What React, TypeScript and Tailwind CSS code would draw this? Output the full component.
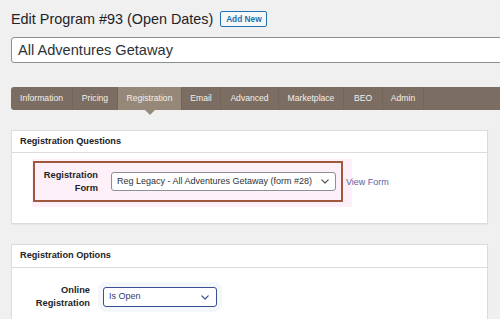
import React from "react";

const Chevron = ({ color = "#50575e" }: { color?: string }) => (
  <svg width="8" height="5" viewBox="0 0 8 5" fill="none">
    <polyline points="0.8,0.8 4,4 7.2,0.8" stroke={color} strokeWidth="1.2" strokeLinecap="round" strokeLinejoin="round" />
  </svg>
);

const tabs = [
  { name: "Information", w: 62 },
  { name: "Pricing", w: 45 },
  { name: "Registration", w: 64, active: true },
  { name: "Email", w: 39 },
  { name: "Advanced", w: 58 },
  { name: "Marketplace", w: 65 },
  { name: "BEO", w: 39 },
  { name: "Admin", w: 41 },
];

export default function App() {
  return (
    <div
      className="w-[500px] h-[319px] overflow-hidden bg-[#f0f0f1] pl-[11px]"
      style={{ fontFamily: '"Liberation Sans", Arial, sans-serif' }}
    >
      {/* Title row */}
      <div className="flex items-center h-[16px] mt-[11px]">
        <h1 className="text-[14.4px] leading-none text-[#1d2327] whitespace-nowrap">
          Edit Program #93 (Open Dates)
        </h1>
        <button className="ml-[7px] h-[16px] w-[47px] border border-[#2271b1] rounded-[2px] bg-[#f6f7f7] text-[#2271b1] text-[8.3px] font-bold leading-none flex items-center justify-center">
          Add New
        </button>
      </div>

      {/* Title input */}
      <div className="mt-[10px] w-[500px] h-[26px] bg-white border border-[#8c8f94] rounded-[3px] flex items-center pl-[6px]">
        <span className="text-[14.6px] text-[#2c3338] leading-none whitespace-nowrap">All Adventures Getaway</span>
      </div>

      {/* Tabs */}
      <div className="mt-[24px] w-[500px] h-[23px] bg-[#7b6d61] rounded-l-[3px] flex">
        {tabs.map((t) => (
          <div
            key={t.name}
            style={{ width: t.w }}
            className={
              "relative h-full flex items-center justify-center border-r border-[#72655a] text-[8.6px] text-[#f3efeb] whitespace-nowrap " +
              (t.active ? "bg-[#958879]" : "")
            }
          >
            {t.name}
            {t.active && (
              <div className="absolute left-1/2 -translate-x-1/2 top-full w-0 h-0 border-l-[5px] border-r-[5px] border-t-[5px] border-l-transparent border-r-transparent border-t-[#958879]" />
            )}
          </div>
        ))}
      </div>

      {/* Panel 1 */}
      <div className="mt-[20px] w-[477px] h-[94px] bg-white border border-[#dcdcde] shadow-[0_1px_1px_rgba(0,0,0,0.04)]">
        <div className="h-[22px] border-b border-[#dcdcde] flex items-center pl-[8px]">
          <span className="text-[9.2px] font-bold text-[#1d2327]">Registration Questions</span>
        </div>
        <div className="pt-[6px] pl-[20px] flex items-center">
          <div className="w-[320px] h-[48px] bg-[#fdf0f8] pl-[1px] pt-[2px]">
            <div className="w-[310px] h-[41px] border-[2px] border-[#a0583e] flex items-center">
              <div className="w-[63px] text-right text-[9.3px] font-bold leading-[13px] text-[#1d2327]">
                Registration
                <br />
                Form
              </div>
              <div className="ml-[13px] w-[225px] h-[19px] border border-[#8c8f94] rounded-[3px] bg-white flex items-center justify-between pl-[5px] pr-[6px]">
                <span className="text-[9px] text-[#2c3338] whitespace-nowrap">
                  Reg Legacy - All Adventures Getaway (form #28)
                </span>
                <Chevron />
              </div>
            </div>
          </div>
          <a className="ml-[-6px] text-[9px] text-[#5a5fa8] whitespace-nowrap">View Form</a>
        </div>
      </div>

      {/* Panel 2 */}
      <div className="mt-[20px] w-[477px] h-[100px] bg-white border border-[#dcdcde] shadow-[0_1px_1px_rgba(0,0,0,0.04)]">
        <div className="h-[23px] border-b border-[#dcdcde] flex items-center pl-[8px]">
          <span className="text-[9.2px] font-bold text-[#1d2327]">Registration Options</span>
        </div>
        <div className="pt-[16px] pl-[12px] flex items-center">
          <div className="w-[66px] text-right text-[9.3px] font-bold leading-[13px] text-[#1d2327]">
            Online
            <br />
            Registration
          </div>
          <div className="ml-[13px] w-[114px] h-[20px] border-[1.5px] border-[#3b4f94] rounded-[3px] bg-white flex items-center justify-between pl-[5px] pr-[7px] shadow-[0_0_0_5px_#f4f8fc]">
            <span className="text-[9px] text-[#2d3f7c] whitespace-nowrap">Is Open</span>
            <Chevron color="#3b4f94" />
          </div>
        </div>
      </div>
    </div>
  );
}
